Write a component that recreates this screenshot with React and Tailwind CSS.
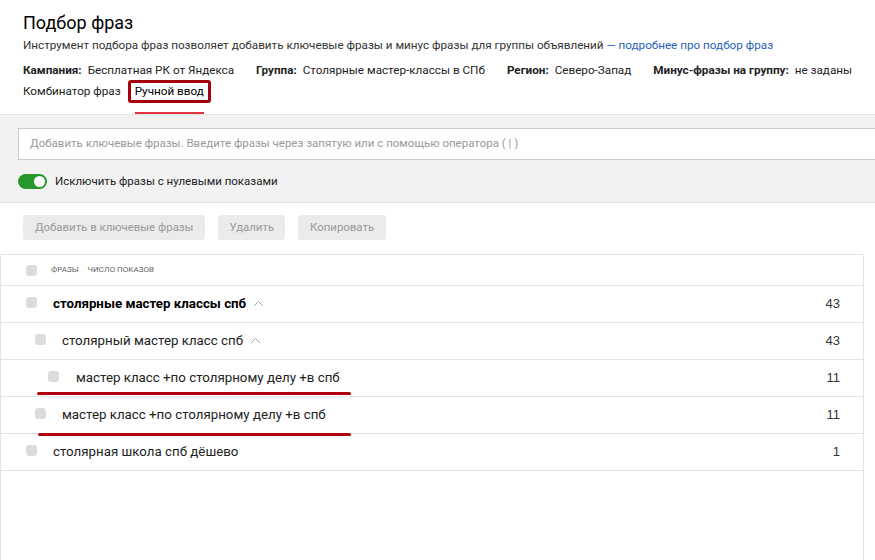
import React from "react"

const rows = [
  { text: "столярные мастер классы спб", count: 43, bold: true, pl: 25, gap: 16, chevron: true },
  { text: "столярный мастер класс спб", count: 43, pl: 34, gap: 16, chevron: true },
  { text: "мастер класс +по столярному делу +в спб", count: 11, pl: 47, gap: 17, mark: { left: 36, width: 314, top: 32 } },
  { text: "мастер класс +по столярному делу +в спб", count: 11, pl: 34, gap: 16, mark: { left: 37, width: 313, top: 36 } },
  { text: "столярная школа спб дёшево", count: 1, pl: 25, gap: 16 },
]

function Checkbox() {
  return <span className="block w-[11px] h-[11px] rounded-[3px] bg-[#dcdcdc] shrink-0" />
}

function ChevronUp() {
  return (
    <svg width="11" height="7" viewBox="0 0 11 7" className="ml-[7px] mt-[-2px]">
      <polyline points="1,6 5.5,1.5 10,6" fill="none" stroke="#a8a8a8" strokeWidth="1" />
    </svg>
  )
}

function MetaItem({ label, value }) {
  return (
    <span className="flex gap-[6px] shrink-0 whitespace-nowrap">
      <b className="font-bold text-[#222]">{label}</b>
      <span>{value}</span>
    </span>
  )
}

export default function App() {
  return (
    <div className="h-[560px] w-[875px] overflow-hidden flex flex-col bg-white text-[#222] font-['Roboto',sans-serif]">
      {/* header */}
      <div className="px-[23px] pt-[11px]">
        <h1 className="text-[18px] leading-[24px] text-black">Подбор фраз</h1>
        <p className="mt-[2px] text-[11.7px] leading-[16px] text-[#333] whitespace-nowrap">
          Инструмент подбора фраз позволяет добавить ключевые фразы и минус фразы для группы объявлений{" "}
          <span className="text-[#2a62b8]">— подробнее про подбор фраз</span>
        </p>
        <div className="mt-[9px] flex gap-[22px] text-[11.7px] leading-[16px]">
          <MetaItem label="Кампания:" value="Бесплатная РК от Яндекса" />
          <MetaItem label="Группа:" value="Столярные мастер-классы в СПб" />
          <MetaItem label="Регион:" value="Северо-Запад" />
          <MetaItem label="Минус-фразы на группу:" value="не заданы" />
        </div>
        <div className="mt-[2px] flex items-start text-[11.7px] leading-[17px] whitespace-nowrap">
          <span className="pt-[3px] mr-[7px]">Комбинатор фраз</span>
          <div className="flex flex-col">
            <span className="border-[3px] border-[#a5000e] rounded-[3px] px-[4px] text-black">Ручной ввод</span>
            <span className="mt-[9px] mx-[7px] h-[2px] bg-[#e4343f]" />
          </div>
        </div>
      </div>

      {/* gray panel */}
      <div className="bg-[#f2f2f2] border-y border-[#e3e3e3] pl-[18px] pt-[13px] pb-[13px]">
        <div className="h-[32px] bg-white border border-r-0 border-[#cccccc] flex items-center pl-[11px] text-[11.5px] text-[#999] whitespace-nowrap">
          Добавить ключевые фразы. Введите фразы через запятую или с помощью оператора ( | )
        </div>
        <div className="mt-[14px] flex items-center gap-[8px] text-[11.5px] leading-[15px] text-[#222]">
          <span className="w-[29px] h-[15px] rounded-full bg-[#28982c] flex items-center justify-end pr-[2px]">
            <span className="w-[11px] h-[11px] rounded-full bg-white" />
          </span>
          Исключить фразы с нулевыми показами
        </div>
      </div>

      {/* buttons */}
      <div className="mt-[12px] px-[23px] flex gap-[13px] text-[11.4px] text-[#999] whitespace-nowrap">
        <span className="h-[25px] px-[12px] flex items-center rounded-[3px] bg-[#ebebeb]">Добавить в ключевые фразы</span>
        <span className="h-[25px] px-[11px] flex items-center rounded-[3px] bg-[#ebebeb]">Удалить</span>
        <span className="h-[25px] px-[12px] flex items-center rounded-[3px] bg-[#ebebeb]">Копировать</span>
      </div>

      {/* table */}
      <div className="mt-[14px] w-[864px] flex-1 flex flex-col border-l border-r border-t border-[#e3e3e3]">
        <div className="h-[31px] flex items-center pl-[25px] border-b border-[#e3e3e3] text-[8px] text-[#666] uppercase">
          <Checkbox />
          <span className="ml-[14px]">Фразы</span>
          <span className="ml-[9px]">Число показов</span>
        </div>
        {rows.map((r, i) => (
          <div
            key={i}
            className="relative h-[37px] flex items-center border-b border-[#e3e3e3] pr-[23px] text-[13.3px]"
            style={{ paddingLeft: r.pl }}
          >
            <span className="mt-[-4px]"><Checkbox /></span>
            <span className={`${r.bold ? "font-bold text-black" : "text-[#222]"} whitespace-nowrap`} style={{ marginLeft: r.gap }}>
              {r.text}
            </span>
            {r.chevron && <ChevronUp />}
            <span className="ml-auto text-[13px] text-[#333] font-['Liberation_Sans',sans-serif]">{r.count}</span>
            {r.mark && (
              <span
                className="absolute h-[3px] rounded-full bg-[#b0000f]"
                style={{ left: r.mark.left, width: r.mark.width, top: r.mark.top }}
              />
            )}
          </div>
        ))}
        <div className="flex-1" />
      </div>
    </div>
  )
}
